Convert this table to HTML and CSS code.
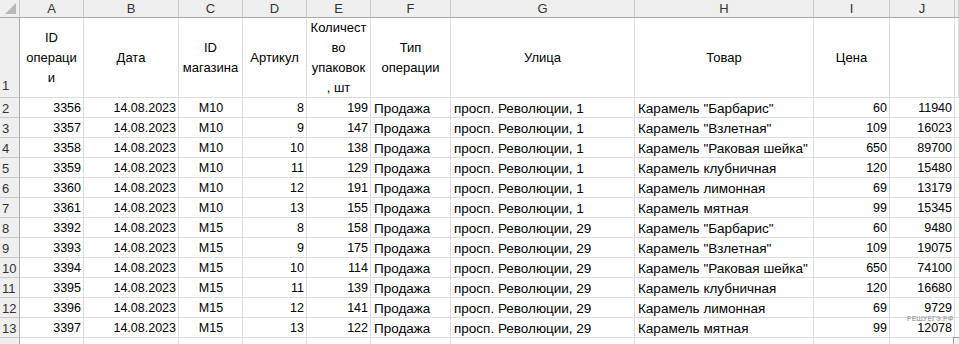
FILE: index.html
```html
<!DOCTYPE html>
<html lang="ru">
<head>
    <meta charset="UTF-8">
    <title>Продажи карамели</title>
    <link rel="stylesheet" href="styles.css">
</head>
<body>
    <div class="sheet">
        <div class="row col-heads">
            <div class="corner"><span class="corner-mark"></span></div>
            <div>A</div><div>B</div><div>C</div><div>D</div><div>E</div><div>F</div>
            <div>G</div><div>H</div><div>I</div><div>J</div><div></div>
        </div>

        <div class="row titles">
            <div class="rh">1</div>
            <div>ID<br>операци<br>и</div>
            <div>Дата</div>
            <div>ID<br>магазина</div>
            <div>Артикул</div>
            <div>Количест<br>во<br>упаковок<br>, шт</div>
            <div>Тип<br>операции</div>
            <div>Улица</div>
            <div>Товар</div>
            <div>Цена</div>
            <div></div>
            <div></div>
        </div>

        <div class="row data"><div class="rh">2</div><div>3356</div><div>14.08.2023</div><div>M10</div><div>8</div><div>199</div><div>Продажа</div><div>просп. Революции, 1</div><div>Карамель "Барбарис"</div><div>60</div><div>11940</div><div></div></div>
        <div class="row data"><div class="rh">3</div><div>3357</div><div>14.08.2023</div><div>M10</div><div>9</div><div>147</div><div>Продажа</div><div>просп. Революции, 1</div><div>Карамель "Взлетная"</div><div>109</div><div>16023</div><div></div></div>
        <div class="row data"><div class="rh">4</div><div>3358</div><div>14.08.2023</div><div>M10</div><div>10</div><div>138</div><div>Продажа</div><div>просп. Революции, 1</div><div>Карамель "Раковая шейка"</div><div>650</div><div>89700</div><div></div></div>
        <div class="row data"><div class="rh">5</div><div>3359</div><div>14.08.2023</div><div>M10</div><div>11</div><div>129</div><div>Продажа</div><div>просп. Революции, 1</div><div>Карамель клубничная</div><div>120</div><div>15480</div><div></div></div>
        <div class="row data"><div class="rh">6</div><div>3360</div><div>14.08.2023</div><div>M10</div><div>12</div><div>191</div><div>Продажа</div><div>просп. Революции, 1</div><div>Карамель лимонная</div><div>69</div><div>13179</div><div></div></div>
        <div class="row data"><div class="rh">7</div><div>3361</div><div>14.08.2023</div><div>M10</div><div>13</div><div>155</div><div>Продажа</div><div>просп. Революции, 1</div><div>Карамель мятная</div><div>99</div><div>15345</div><div></div></div>
        <div class="row data"><div class="rh">8</div><div>3392</div><div>14.08.2023</div><div>M15</div><div>8</div><div>158</div><div>Продажа</div><div>просп. Революции, 29</div><div>Карамель "Барбарис"</div><div>60</div><div>9480</div><div></div></div>
        <div class="row data"><div class="rh">9</div><div>3393</div><div>14.08.2023</div><div>M15</div><div>9</div><div>175</div><div>Продажа</div><div>просп. Революции, 29</div><div>Карамель "Взлетная"</div><div>109</div><div>19075</div><div></div></div>
        <div class="row data"><div class="rh">10</div><div>3394</div><div>14.08.2023</div><div>M15</div><div>10</div><div>114</div><div>Продажа</div><div>просп. Революции, 29</div><div>Карамель "Раковая шейка"</div><div>650</div><div>74100</div><div></div></div>
        <div class="row data"><div class="rh">11</div><div>3395</div><div>14.08.2023</div><div>M15</div><div>11</div><div>139</div><div>Продажа</div><div>просп. Революции, 29</div><div>Карамель клубничная</div><div>120</div><div>16680</div><div></div></div>
        <div class="row data"><div class="rh">12</div><div>3396</div><div>14.08.2023</div><div>M15</div><div>12</div><div>141</div><div>Продажа</div><div>просп. Революции, 29</div><div>Карамель лимонная</div><div>69</div><div>9729</div><div></div></div>
        <div class="row data"><div class="rh">13</div><div>3397</div><div>14.08.2023</div><div>M15</div><div>13</div><div>122</div><div>Продажа</div><div>просп. Революции, 29</div><div>Карамель мятная</div><div>99</div><div>12078</div><div></div></div>
        <div class="row data"><div class="rh">14</div><div></div><div></div><div></div><div></div><div></div><div></div><div></div><div></div><div></div><div></div><div></div></div>

        <div class="watermark">РЕШУЕГЭ.РФ</div>
        <div class="paste-btn"></div>
    </div>
</body>
</html>
```

FILE: styles.css
```css
:root {
    --cols: 20px 64px 95px 64px 64px 64px 80px 184px 179px 76px 65px 1fr;
    --grid-line: #dadcdd;
    --head-bg: #efefef;
    --head-line: #c9c9c9;
    --head-edge: #a9a9a9;
    --text: #000;
}

body {
    margin: 0;
    background: #fff;
    font-family: 'Liberation Sans', Arial, sans-serif;
    font-size: 12.5px;
    color: var(--text);
    overflow: hidden;
}

.sheet {
    position: relative;
    width: 959px;
    height: 344px;
    overflow: hidden;
}

.row {
    display: grid;
    grid-template-columns: var(--cols);
}
.row > div {
    box-sizing: border-box;
    border-right: 1px solid var(--grid-line);
    border-bottom: 1px solid var(--grid-line);
    white-space: nowrap;
    overflow: hidden;
}

/* column letters */
.col-heads {
    height: 18px;
}
.col-heads > div {
    background: var(--head-bg);
    color: #333;
    font-size: 13px;
    text-align: center;
    line-height: 17px;
    border-right-color: var(--head-line);
    border-bottom-color: var(--head-edge);
}
.corner {
    position: relative;
}
.corner-mark {
    position: absolute;
    right: 3px;
    bottom: 3px;
    width: 0;
    height: 0;
    border-left: 11px solid transparent;
    border-bottom: 11px solid #b7b7b7;
}

/* row numbers */
.rh {
    background: var(--head-bg);
    color: #333;
    font-size: 13px;
    padding-left: 2px;
    border-right-color: var(--head-edge) !important;
    border-bottom-color: var(--head-line) !important;
}

/* header row with wrapped captions */
.titles {
    height: 80px;
}
.titles > div {
    display: flex;
    align-items: center;
    justify-content: center;
    text-align: center;
    line-height: 20px;
    font-size: 13px;
}
.titles > .rh {
    align-items: flex-end;
    justify-content: flex-start;
    padding-bottom: 1px;
}

/* data rows */
.data {
    height: 20px;
}
.data > div {
    line-height: 21px;
    padding: 0 2px 0 3px;
}
.data > .rh {
    padding-left: 2px;
}
.data > :nth-child(2),
.data > :nth-child(3),
.data > :nth-child(5),
.data > :nth-child(6),
.data > :nth-child(10),
.data > :nth-child(11) {
    text-align: right;
}
.data > :nth-child(4) {
    text-align: center;
}
/* text columns: type, street, product */
.data > :nth-child(7),
.data > :nth-child(8),
.data > :nth-child(9) {
    font-size: 13.5px;
}

.watermark {
    position: absolute;
    left: 907px;
    top: 315px;
    font-size: 6.5px;
    font-weight: bold;
    letter-spacing: 0.3px;
    color: #a9a9a9;
    line-height: 8px;
}

.paste-btn {
    position: absolute;
    left: 953px;
    top: 337px;
    width: 9px;
    height: 9px;
    box-sizing: border-box;
    border: 1px solid #9a9a9a;
    background: #f4f4f4;
}
```
